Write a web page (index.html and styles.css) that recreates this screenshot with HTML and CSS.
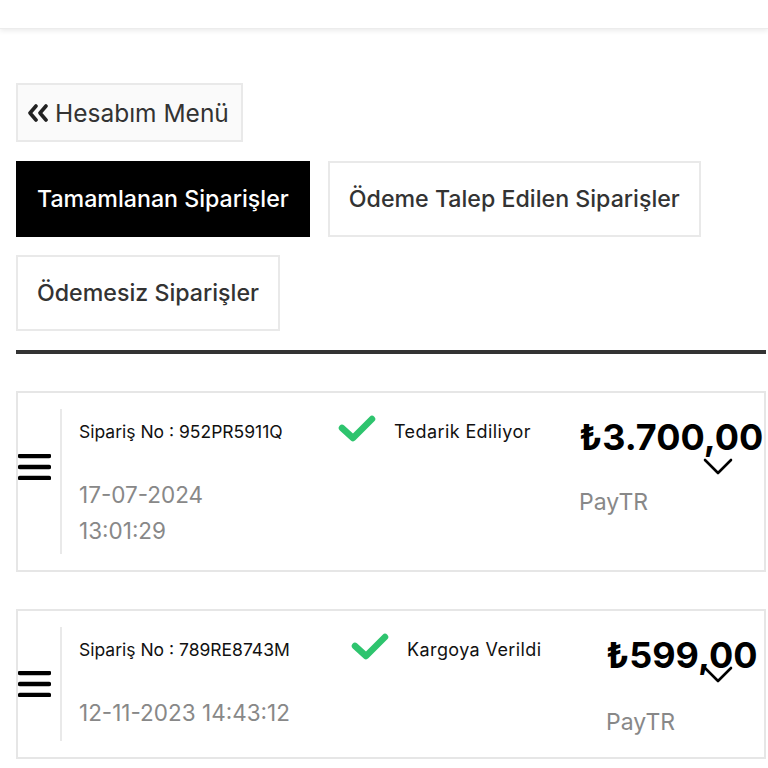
FILE: index.html
```html
<!DOCTYPE html>
<html lang="tr">
<head>
<meta charset="utf-8">
<title>Siparişlerim</title>
<link rel="stylesheet" href="styles.css">
</head>
<body>
<header class="topbar"></header>
<main class="page">
  <a class="menu-btn" href="#">
    <svg class="menu-btn__icon" width="22" height="18" viewBox="0 0 22 18"><polyline points="9,2 3,9 9,16" /><polyline points="19,2 13,9 19,16" /></svg>
    <span>Hesabım Menü</span>
  </a>

  <nav class="tabs">
    <a class="tab tab--active" href="#">Tamamlanan Siparişler</a>
    <a class="tab" href="#">Ödeme Talep Edilen Siparişler</a>
    <a class="tab" href="#">Ödemesiz Siparişler</a>
  </nav>

  <hr class="divider">

  <section class="orders">
    <article class="order order--tall">
      <div class="order__handle">
        <svg width="33" height="26" viewBox="0 0 33 26"><line x1="2" y1="2" x2="31" y2="2"/><line x1="2" y1="13" x2="31" y2="13"/><line x1="2" y1="24" x2="31" y2="24"/></svg>
      </div>
      <div class="order__body">
        <div class="order__info order__info--a">
          <div class="order__no">Sipariş No : 952PR5911Q</div>
          <div class="order__date order__date--stacked"><span>17-07-2024</span> <span>13:01:29</span></div>
        </div>
        <div class="order__status order__status--a">
          <svg class="check" width="38" height="28" viewBox="0 0 38 28"><polyline points="4,14 15,24 34,5"/></svg>
          <span>Tedarik Ediliyor</span>
        </div>
        <div class="order__pay">
          <div class="order__price">₺3.700,00</div>
          <div class="order__method">PayTR</div>
        </div>
      </div>
      <svg class="order__toggle order__toggle--a" width="30" height="17" viewBox="0 0 30 17"><polyline points="2,2 15,15 28,2"/></svg>
    </article>

    <article class="order">
      <div class="order__handle">
        <svg width="33" height="26" viewBox="0 0 33 26"><line x1="2" y1="2" x2="31" y2="2"/><line x1="2" y1="13" x2="31" y2="13"/><line x1="2" y1="24" x2="31" y2="24"/></svg>
      </div>
      <div class="order__body">
        <div class="order__info order__info--b">
          <div class="order__no">Sipariş No : 789RE8743M</div>
          <div class="order__date">12-11-2023 14:43:12</div>
        </div>
        <div class="order__status order__status--b">
          <svg class="check" width="38" height="28" viewBox="0 0 38 28"><polyline points="4,14 15,24 34,5"/></svg>
          <span>Kargoya Verildi</span>
        </div>
        <div class="order__pay order__pay--b">
          <div class="order__price">₺599,00</div>
          <div class="order__method">PayTR</div>
        </div>
      </div>
      <svg class="order__toggle order__toggle--b" width="30" height="17" viewBox="0 0 30 17"><polyline points="2,2 15,15 28,2"/></svg>
    </article>
  </section>
</main>
</body>
</html>
```

FILE: styles.css
```css
* { box-sizing: border-box; }

html, body {
  margin: 0;
  padding: 0;
  background: #fff;
  font-family: "Inter", "Open Sans", "DejaVu Sans", sans-serif;
  color: #333;
}

.topbar {
  height: 29px;
  background: #fff;
  box-shadow: 0 2px 5px rgba(0, 0, 0, 0.08);
  border-bottom: 1px solid #ececec;
}

.page {
  padding: 54px 2px 0 16px;
}

.menu-btn {
  display: inline-flex;
  align-items: center;
  gap: 6px;
  height: 59px;
  width: 227px;
  padding: 0 9px;
  background: #fafafa;
  border: 2px solid #e9e9e9;
  color: #333;
  text-decoration: none;
  font-size: 24.5px;
  white-space: nowrap;
}

.menu-btn__icon polyline {
  fill: none;
  stroke: #222;
  stroke-width: 3.6;
  stroke-linecap: round;
  stroke-linejoin: round;
}

.tabs {
  display: flex;
  flex-wrap: wrap;
  gap: 18px;
  margin-top: 19px;
}

.tab {
  display: flex;
  align-items: center;
  height: 76px;
  padding: 0 19px;
  border: 2px solid #e9e9e9;
  background: #fff;
  color: #333;
  text-decoration: none;
  font-size: 23.2px;
  font-weight: 500;
  white-space: nowrap;
}

.tab--active {
  background: #000;
  border-color: #000;
  color: #fff;
}

.divider {
  margin: 19px 0 0;
  border: 0;
  height: 4px;
  background: #333;
}

.orders {
  display: flex;
  flex-direction: column;
  gap: 37px;
  margin-top: 37px;
}

.order {
  position: relative;
  display: flex;
  border: 2px solid #e6e6e6;
  padding: 16px 0;
  height: 150px;
}

.order--tall { height: 181px; }

.order__handle {
  width: 42px;
  display: flex;
  align-items: center;
}

.order--tall .order__handle { padding-bottom: 30px; }

.order__handle line {
  stroke: #000;
  stroke-width: 4.4;
  stroke-linecap: round;
}

.order__body {
  flex: 1;
  display: flex;
  border-left: 2px solid #e9e9e9;
  padding-left: 17px;
  padding-top: 12px;
  min-width: 0;
}

.order__info--a { width: 259px; }
.order__info--b { width: 272px; }

.order__no {
  font-size: 17.5px;
  color: #111;
  line-height: 22px;
  white-space: nowrap;
}

.order__date {
  margin-top: 34px;
  font-size: 22.5px;
  color: #888;
  line-height: 36px;
  white-space: nowrap;
}

.order__date--stacked span { display: block; }

.order__status {
  display: flex;
  align-items: flex-start;
  gap: 18px;
  font-size: 18px;
  letter-spacing: 0.4px;
  color: #111;
  white-space: nowrap;
}

.order__status span { line-height: 22px; }

.order__status--a { width: 241px; }
.order__status--b { width: 255px; }

.check {
  margin-top: -7px;
  flex-shrink: 0;
}

.check polyline {
  fill: none;
  stroke: #2ec46e;
  stroke-width: 6.5;
  stroke-linecap: round;
  stroke-linejoin: round;
}

.order__pay {
  white-space: nowrap;
}

.order__price {
  font-size: 36px;
  font-weight: 700;
  color: #000;
  line-height: 40px;
  margin-top: -4px;
}

.order__method {
  margin-top: 31px;
  font-size: 23px;
  line-height: 28px;
  color: #888;
}

.order__pay--b .order__method { margin-top: 33px; }

.order__toggle {
  position: absolute;
  right: 31px;
}

.order__toggle--a { top: 65px; }
.order__toggle--b { top: 55px; }

.order__toggle polyline {
  fill: none;
  stroke: #000;
  stroke-width: 2.6;
  stroke-linecap: round;
  stroke-linejoin: round;
}
```
